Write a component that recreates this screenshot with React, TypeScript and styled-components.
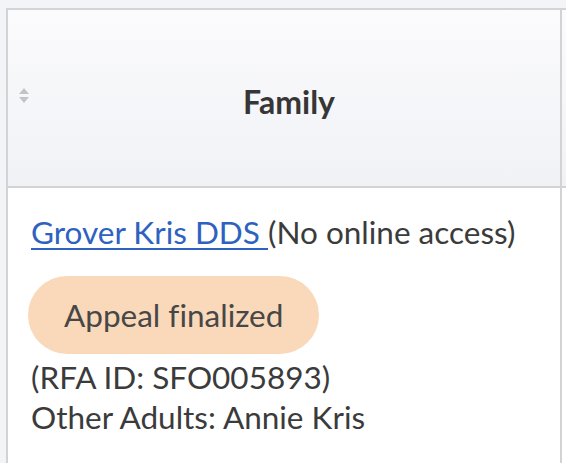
import React from "react";
import styled, { createGlobalStyle } from "styled-components";

const Global = createGlobalStyle`
  html, body { margin: 0; padding: 0; background: #f3f4f8; }
  body { font-family: Lato, "Open Sans", sans-serif; color: #3b3b3b; font-variant-ligatures: none; }
`;

const Page = styled.div`
  padding: 8px 0 0 6px;
  height: 455px;
  overflow: hidden;
`;

const Table = styled.div`
  display: grid;
  grid-template-columns: 554px 200px;
  grid-template-rows: 178px 1fr;
  border-top: 2px solid #d3d3d5;
  border-left: 2px solid #d3d3d5;
  background: #fff;
  height: 100%;
`;

const HeadCell = styled.div`
  display: flex;
  align-items: center;
  padding: 6px 12px 0 10px;
  background: linear-gradient(#fbfbfd, #f1f2f6);
  border-right: 2px solid #d3d3d5;
  border-bottom: 2px solid #d3d3d5;
`;

const Label = styled.div`
  flex: 1;
  text-align: center;
  font-size: 32px;
  font-weight: 700;
  color: #363636;
`;

const SortIcon = styled.svg`
  width: 12px;
  height: 18px;
  flex: none;
  margin-top: -10px;
`;

const BodyCell = styled.div`
  padding: 24px 20px 0 23px;
  border-right: 2px solid #d3d3d5;
  font-size: 31.5px;
  line-height: 40px;
`;

const Line = styled.div`
  white-space: nowrap;
`;

const Link = styled.a`
  color: #2e62c0;
  text-decoration: underline;
  text-underline-offset: 4px;
  text-decoration-thickness: 2px;
`;

const Badge = styled.div`
  display: inline-block;
  margin: 24px 0 3px -3px;
  padding: 19px 36px;
  border-radius: 40px;
  background: #f9d9ba;
  color: #474747;
  font-size: 31.5px;
  line-height: 40px;
`;

export default function App() {
  return (
    <>
      <Global />
      <Page>
        <Table>
          <HeadCell>
            <SortIcon viewBox="0 0 12 18">
              <path d="M6 1 L11 7 L1 7 Z" fill="#c3c4c8" />
              <path d="M1 10 L11 10 L6 16 Z" fill="#c3c4c8" />
            </SortIcon>
            <Label>Family</Label>
          </HeadCell>
          <HeadCell />
          <BodyCell>
            <Line>
              <Link href="#">Grover Kris DDS </Link>(No online access)
            </Line>
            <Badge>Appeal finalized</Badge>
            <Line>(RFA ID: SFO005893)</Line>
            <Line>Other Adults: Annie Kris</Line>
          </BodyCell>
          <BodyCell />
        </Table>
      </Page>
    </>
  );
}
